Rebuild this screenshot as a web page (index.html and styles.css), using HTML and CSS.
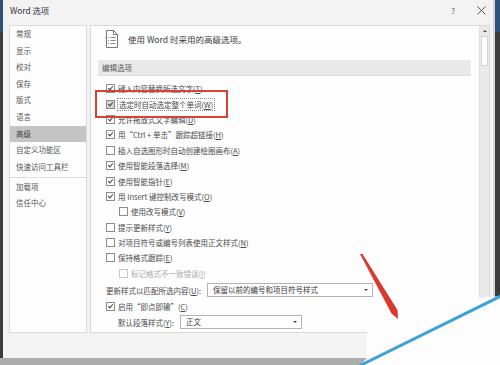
FILE: index.html
```html
<!DOCTYPE html>
<html lang="zh-CN">
<head>
    <meta charset="UTF-8">
    <title>Word 选项</title>
    <link rel="stylesheet" href="styles.css">
</head>
<body>
<div class="screen">
    <div class="dialog">
        <div class="titlebar">
            <span class="title">Word 选项</span>
            <span class="help">?</span>
            <svg class="close" width="9" height="9" viewBox="0 0 9 9"><path d="M0.5 0.5L8.5 8.5M8.5 0.5L0.5 8.5" stroke="#555" stroke-width="1"/></svg>
        </div>

        <div class="panes">
            <ul class="nav">
                <li>常规</li>
                <li>显示</li>
                <li>校对</li>
                <li>保存</li>
                <li>版式</li>
                <li>语言</li>
                <li class="active">高级</li>
                <li>自定义功能区</li>
                <li>快速访问工具栏</li>
                <li class="sep"></li>
                <li>加载项</li>
                <li>信任中心</li>
            </ul>

            <div class="main">
                <div class="content">
                    <div class="intro">
                        <svg width="12" height="18" viewBox="0 0 12 18">
                            <path d="M0.5 0.5H7.5L11.5 4.5V17.5H0.5Z" fill="#fff" stroke="#777"/>
                            <path d="M7.5 0.5V4.5H11.5" fill="none" stroke="#777"/>
                            <path d="M2 7.5H3M4.5 7.5H9.5M2 10.5H3M4.5 10.5H9.5M2 13.5H3M4.5 13.5H9.5" stroke="#888"/>
                        </svg>
                        <span>使用 Word 时采用的高级选项。</span>
                    </div>

                    <div class="section">编辑选项</div>

                    <div class="opts">
                        <div class="row"><span class="cb on"></span>键入内容替换所选文字(<u>T</u>)</div>
                        <div class="row"><span class="cb on hot"></span><span class="focus">选定时自动选定整个单词(<u>W</u>)</span></div>
                        <div class="row"><span class="cb on"></span>允许拖放式文字编辑(<u>D</u>)</div>
                        <div class="row"><span class="cb on"></span>用“Ctrl + 单击”跟踪超链接(<u>H</u>)</div>
                        <div class="row"><span class="cb"></span>插入自选图形时自动创建绘图画布(<u>A</u>)</div>
                        <div class="row"><span class="cb on"></span>使用智能段落选择(<u>M</u>)</div>
                        <div class="row"><span class="cb on"></span>使用智能指针(<u>E</u>)</div>
                        <div class="row"><span class="cb on"></span>用 Insert 键控制改写模式(<u>O</u>)</div>
                        <div class="row sub"><span class="cb"></span>使用改写模式(<u>V</u>)</div>
                        <div class="row"><span class="cb"></span>提示更新样式(<u>Y</u>)</div>
                        <div class="row"><span class="cb"></span>对项目符号或编号列表使用正文样式(<u>N</u>)</div>
                        <div class="row"><span class="cb"></span>保持格式跟踪(<u>E</u>)</div>
                        <div class="row sub off"><span class="cb"></span>标记格式不一致错误(<u>I</u>)</div>

                        <div class="row pick">
                            <span class="label wide">更新样式以匹配所选内容(<u>U</u>):</span>
                            <span class="select long">保留以前的编号和项目符号样式<i class="caret"></i></span>
                        </div>
                        <div class="row"><span class="cb on"></span>启用“即点即输”(<u>C</u>)</div>
                        <div class="row pick sub2">
                            <span class="label">默认段落样式(<u>Y</u>):</span>
                            <span class="select short">正文<i class="caret"></i></span>
                        </div>
                    </div>
                </div>

                <div class="scrollbar">
                    <div class="up"></div>
                    <div class="thumb"></div>
                </div>
            </div>
        </div>
    </div>
    <div class="taskbar"></div>

    <!-- 标注 -->
    <div class="mark"></div>
    <svg class="overlay" width="500" height="365" viewBox="0 0 500 365">
        <polygon points="367,318 480,298 500,296 500,365 360,365 367,358" fill="#fdfdfd"/>
        <line x1="501" y1="296" x2="359" y2="366" stroke="#3ea3d4" stroke-width="3"/>
        <polygon points="360,254 362.5,254 397.5,310 398,319 391.5,313.5" fill="#d83a2e"/>
    </svg>
</div>
</body>
</html>
```

FILE: styles.css
```css
body {
    margin: 0;
    background: #3a3a3a;
    font-family: "Noto Sans CJK SC", "Noto Sans", sans-serif;
    font-size: 7.5px;
    color: #4a4a4a;
}

.screen {
    position: relative;
    width: 500px;
    height: 365px;
    overflow: hidden;
    background: linear-gradient(#2e5079 0, #2e5079 32px, #3b3b3b 32px);
}

.dialog {
    margin-left: 3px;
    width: 490px;
    height: 358px;
    background: #f3f3f3;
    border-right: 2px solid #d6d6d6;
}

.titlebar {
    height: 20px;
    display: flex;
    align-items: center;
    padding: 0 7px;
}

.title {
    font-size: 8.3px;
    color: #333;
}

.help {
    margin-left: auto;
    font-size: 8px;
    color: #555;
}

.close {
    margin-left: 22px;
}

.panes {
    display: flex;
    gap: 3px;
    margin-top: 5px;
    padding: 0 3px 0 6px;
    height: 308px;
}

.nav {
    list-style: none;
    margin: 0;
    padding: 0;
    width: 76px;
    border: 1px solid #d9d9d9;
    background: #fdfdfd;
}

.nav li {
    padding-left: 6px;
    line-height: 16.6px;
    height: 16.6px;
    color: #555;
}

.nav li.active {
    background: #c4c4c4;
    color: #444;
}

.nav li.sep {
    height: 0;
    margin: 1.5px 0 1px;
    border-top: 1px solid #dcdcdc;
}

.main {
    flex: 1;
    display: flex;
    border: 1px solid #d9d9d9;
    background: #fdfdfd;
}

.content {
    flex: 1;
    padding: 4px 8px 0 7px;
}

.intro {
    display: flex;
    align-items: center;
    gap: 10px;
    padding-left: 8px;
    height: 18px;
}

.intro span {
    font-size: 8.5px;
    color: #3a3a3a;
}

.section {
    margin-top: 12px;
    height: 15px;
    line-height: 15px;
    padding-left: 4px;
    background: #e9e9e9;
    border-bottom: 1px solid #dedede;
    color: #555;
}

.opts {
    margin-top: 5px;
}

.row {
    display: flex;
    align-items: center;
    height: 15.4px;
    padding-left: 8px;
    white-space: nowrap;
}

.row.sub {
    padding-left: 21px;
}

.row.off {
    color: #aaa;
}

.cb {
    position: relative;
    box-sizing: border-box;
    width: 9px;
    height: 9px;
    margin-right: 3px;
    border: 1px solid #8c8c8c;
    background: #fff;
}

.row.off .cb {
    border-color: #c8c8c8;
}

.cb.on::after {
    content: "";
    position: absolute;
    left: 2px;
    top: 0;
    width: 2px;
    height: 4px;
    border: solid #444;
    border-width: 0 1px 1px 0;
    transform: rotate(40deg);
}

.cb.hot {
    background: #d4d4d4;
    border-color: #8a8a8a;
}

.focus {
    outline: 1px dotted #888;
    outline-offset: 0;
    padding: 0 1px;
}

.row.pick {
    height: 18px;
}

.row.pick.sub2 {
    height: 16px;
    padding-left: 20px;
}

.label {
    width: 62px;
}

.label.wide {
    width: 101px;
}

.select {
    position: relative;
    box-sizing: border-box;
    height: 14px;
    line-height: 12px;
    padding-left: 5px;
    border: 1px solid #b4b4b4;
    background: #fff;
    color: #3a3a3a;
}

.select.long {
    width: 166px;
}

.select.short {
    width: 122px;
}

.caret {
    position: absolute;
    right: 4px;
    top: 5px;
    border-left: 2px solid transparent;
    border-right: 2px solid transparent;
    border-top: 2px solid #444;
}

.scrollbar {
    width: 9px;
    background: #e9e9e9;
    border-left: 1px solid #e2e2e2;
}

.scrollbar .up {
    margin: 4px auto 0;
    width: 0;
    height: 0;
    border-left: 2px solid transparent;
    border-right: 2px solid transparent;
    border-bottom: 2px solid #555;
}

.scrollbar .thumb {
    margin: 4px 1px 0;
    height: 28px;
    background: #fff;
    border: 1px solid #d4d4d4;
}

.taskbar {
    height: 7px;
    background: #acacac;
}

.mark {
    position: absolute;
    left: 95px;
    top: 90px;
    width: 129px;
    height: 24px;
    border: 2px solid #d4423c;
}

.overlay {
    position: absolute;
    left: 0;
    top: 0;
    pointer-events: none;
}
```
